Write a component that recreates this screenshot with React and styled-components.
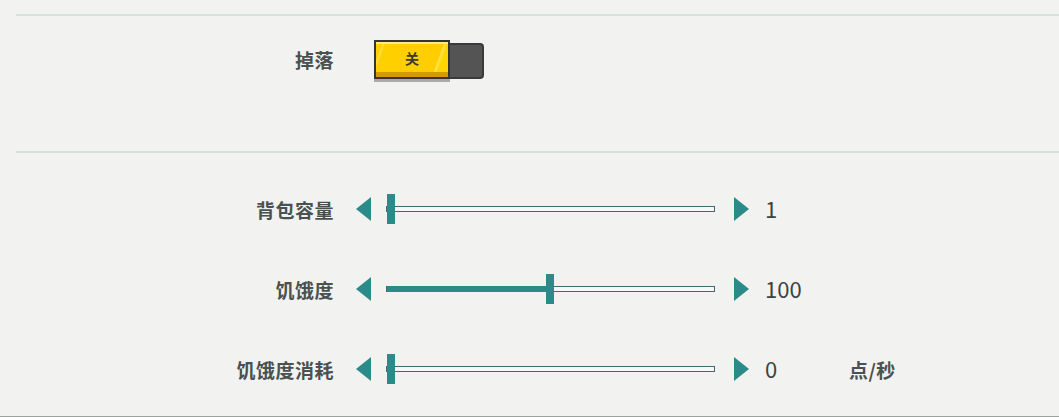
import React from "react";
import styled, { createGlobalStyle } from "styled-components";

const Global = createGlobalStyle`
  html, body { margin: 0; padding: 0; background: #f2f2f0; }
  body { font-family: "Noto Sans CJK SC", "Noto Sans", sans-serif; }
`;

const Page = styled.div`
  width: 1059px;
  height: 417px;
  box-sizing: border-box;
  padding-top: 14px;
  border-bottom: 1px solid #9ca39f;
  background: #f2f2f0;
  overflow: hidden;
`;

const Section = styled.section`
  margin-left: 16px;
  border-top: 2px solid #d4e2d9;
  box-sizing: border-box;
  height: ${(p) => p.$h}px;
  padding-top: ${(p) => p.$pt}px;
`;

const Row = styled.div`
  display: flex;
  align-items: center;
  height: ${(p) => p.$h || 80}px;
`;

const Label = styled.div`
  width: 318px;
  flex: none;
  text-align: right;
  font-size: 19px;
  font-weight: 700;
  letter-spacing: 0.5px;
  margin-right: ${(p) => p.$mr}px;
  color: #4a5151;
  line-height: 1;
  margin-top: ${(p) => p.$mt || 0}px;
`;

const Toggle = styled.div`
  display: flex;
  align-items: flex-start;
  height: 42px;
`;

const Knob = styled.div`
  position: relative;
  width: 76px;
  height: 39px;
  box-sizing: border-box;
  border: 2px solid #353535;
  background: linear-gradient(110deg, #ffd000 0%, #ffcf00 8%, #ffe04a 9%, #ffd000 12%, #ffcd00 80%, #ffe34d 82%, #ffd400 86%);
  box-shadow: inset 0 -5px 0 #d19c00, inset 0 2px 0 #ffe98a, 0 3px 0 #a9a9a9;
  display: flex;
  align-items: center;
  justify-content: center;
  font-size: 14px;
  font-weight: 700;
  color: #3b3b2a;
  padding-bottom: 3px;
  z-index: 1;
`;

const Track = styled.div`
  width: 34px;
  height: 36px;
  margin-top: 3px;
  box-sizing: border-box;
  background: #545454;
  border: 2px solid #3a3a3a;
  border-left: none;
  border-radius: 0 4px 4px 0;
`;

const Arrow = styled.svg`
  flex: none;
  display: block;
  width: 15px;
  height: 24px;
  margin-right: ${(p) => p.$mr}px;
`;

const Slider = styled.div`
  position: relative;
  flex: none;
  width: 329px;
  height: 30px;
  margin-right: 19px;
`;

const Rail = styled.div`
  position: absolute;
  left: 0;
  right: 0;
  top: 12px;
  height: 6px;
  box-sizing: border-box;
  border: 1px solid #3d6c6e;
  background: #f6f7f6;
`;

const Fill = styled.div`
  position: absolute;
  left: 1px;
  top: 12px;
  height: 6px;
  background: #2b8b88;
`;

const Thumb = styled.div`
  position: absolute;
  top: 0;
  width: 8px;
  height: 30px;
  background: #2b8b88;
`;

const Value = styled.div`
  width: 84px;
  flex: none;
  font-family: "Noto Sans CJK SC", "Noto Sans", sans-serif;
  font-size: 22px;
  color: #3c4343;
  line-height: 1;
  margin-top: -3px;
`;

const Unit = styled.div`
  font-size: 19px;
  font-weight: 700;
  letter-spacing: 0.5px;
  color: #4a5151;
  line-height: 1;
`;

const Left = ({ mr }) => (
  <Arrow $mr={mr} viewBox="0 0 15 24">
    <polygon points="15,0 15,24 0,12" fill="#2b8b88" />
  </Arrow>
);
const Right = ({ mr }) => (
  <Arrow $mr={mr} viewBox="0 0 15 24">
    <polygon points="0,0 0,24 15,12" fill="#2b8b88" />
  </Arrow>
);

function SliderRow({ label, value, pos, unit }) {
  const x = 1 + Math.round(pos * 320);
  return (
    <Row>
      <Label $mr={22}>{label}</Label>
      <Left mr={15} />
      <Slider>
        <Rail />
        {x > 1 && <Fill style={{ width: x - 1 }} />}
        <Thumb style={{ left: x }} />
      </Slider>
      <Right mr={16} />
      <Value>{value}</Value>
      {unit && <Unit>{unit}</Unit>}
    </Row>
  );
}

export default function App() {
  return (
    <>
      <Global />
      <Page>
        <Section $h={137} $pt={24}>
          <Row $h={42}>
            <Label $mr={40} $mt={-4}>掉落</Label>
            <Toggle>
              <Knob>关</Knob>
              <Track />
            </Toggle>
          </Row>
        </Section>
        <Section $h={265} $pt={16}>
          <SliderRow label="背包容量" value="1" pos={0} />
          <SliderRow label="饥饿度" value="100" pos={0.4969} />
          <SliderRow label="饥饿度消耗" value="0" pos={0} unit="点/秒" />
        </Section>
      </Page>
    </>
  );
}
